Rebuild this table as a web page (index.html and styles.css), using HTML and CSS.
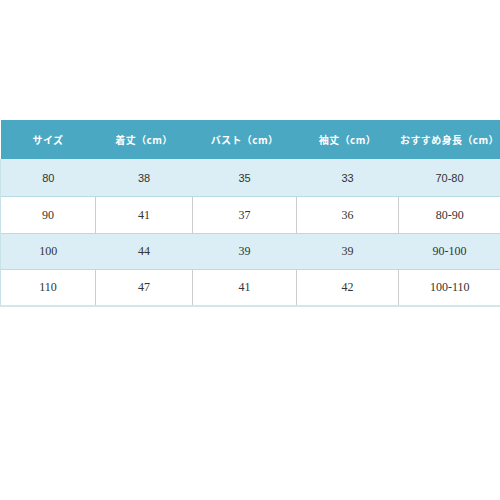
FILE: index.html
```html
<!DOCTYPE html>
<html>
<head>
<meta charset="utf-8">
<link rel="stylesheet" href="styles.css">
</head>
<body>
<div class="page">
<table class="size-table">
  <thead>
    <tr>
      <th class="c1">サイズ</th>
      <th class="c2">着丈（cm）</th>
      <th class="c3">バスト（cm）</th>
      <th class="c4">袖丈（cm）</th>
      <th class="c5">おすすめ身長（cm）</th>
    </tr>
  </thead>
  <tbody>
    <tr class="blue first"><td>80</td><td>38</td><td>35</td><td>33</td><td>70-80</td></tr>
    <tr class="white"><td>90</td><td>41</td><td>37</td><td>36</td><td>80-90</td></tr>
    <tr class="blue short"><td>100</td><td>44</td><td>39</td><td>39</td><td>90-100</td></tr>
    <tr class="white last"><td>110</td><td>47</td><td>41</td><td>42</td><td>100-110</td></tr>
  </tbody>
</table>
</div>
</body>
</html>
```
FILE: styles.css
```css
html, body {
  margin: 0;
  padding: 0;
  background: #ffffff;
}
.page {
  padding-top: 120px;
  width: 500px;
}
.size-table {
  width: 500px;
  border-collapse: collapse;
  table-layout: fixed;
  font-family: "Liberation Serif", "Noto Sans CJK JP", serif;
}
.c1 { width: 95px; }
.c2 { width: 97px; }
.c3 { width: 104px; }
.c4 { width: 102px; }
.c5 { width: 102px; }
.size-table th {
  background: #4ba8c3;
  color: #ffffff;
  height: 39px;
  padding: 0;
  font-family: "Noto Sans CJK JP", sans-serif;
  font-weight: 700;
  font-size: 10px;
  letter-spacing: 0.4px;
  text-align: center;
  white-space: nowrap;
}
.size-table td {
  height: 36px;
  padding: 0;
  text-align: center;
  font-size: 12px;
  color: #333333;
  border-top: 1px solid #b9dbe4;
}
.size-table tr.first td {
  border-top: none;
  height: 37px;
  font-family: "Liberation Sans", sans-serif;
  font-size: 11px;
}
.size-table tr.short td,
.size-table tr.last td {
  height: 35px;
}
.size-table tr.blue td {
  background: #dbeef5;
}
.size-table tr.white td {
  background: #ffffff;
  border-left: 1px solid #cccccc;
}
.size-table tr td:first-child {
  border-left: 1px solid #c9e2e9;
}
.size-table tr.last td {
  border-bottom: 2px solid #d3e6ea;
}
```
